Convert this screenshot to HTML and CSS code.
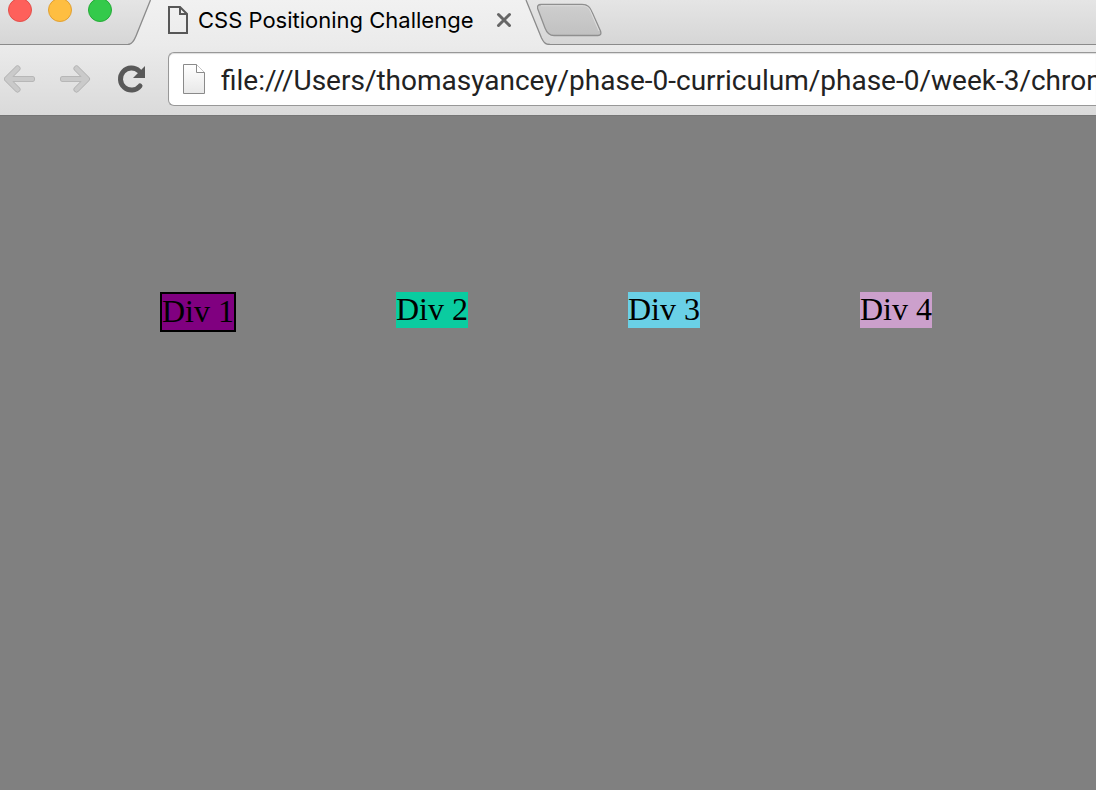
FILE: index.html
```html
<!DOCTYPE html>
<html lang="en">
<head>
<meta charset="utf-8">
<title>CSS Positioning Challenge</title>
<link rel="stylesheet" href="styles.css">
</head>
<body>
<header class="chrome">
  <div class="tab-strip">
    <div class="window-controls">
      <button class="light" aria-label="Close window"><svg width="24" height="22" viewBox="0 2 24 22"><circle cx="12" cy="12" r="11.5" fill="#fe605b" stroke="#e2504b"/></svg></button>
      <button class="light" aria-label="Minimize window"><svg width="24" height="22" viewBox="0 2 24 22"><circle cx="12" cy="12" r="11.5" fill="#febe41" stroke="#e0a034"/></svg></button>
      <button class="light" aria-label="Zoom window"><svg width="24" height="22" viewBox="0 2 24 22"><circle cx="12" cy="12" r="11.5" fill="#34ca4b" stroke="#26ab38"/></svg></button>
    </div>
    <div class="tab">
      <svg class="tab-shape" width="422" height="45" viewBox="0 0 422 45" aria-hidden="true">
        <defs><linearGradient id="tabFill" x1="0" y1="0" x2="0" y2="1"><stop offset="0" stop-color="#f1f1f1"/><stop offset="1" stop-color="#ebebeb"/></linearGradient></defs>
        <path d="M0 45V44.500C4 44.500 6 41 8 36L22.500 0H398L413.500 38C415.500 42 417 44.500 422 44.500V45Z" fill="url(#tabFill)"/>
        <path d="M0 44.500C4 44.500 6 41 8 36L22.500 0M398 0L413.500 38C415.500 42 417 44.500 422 44.500" fill="none" stroke="#8b8b8b" stroke-width="1.300"/>
      </svg>
      <svg class="tab-icon" width="20" height="28" viewBox="0 0 20 28" aria-hidden="true"><path d="M1 1H12L19 8V27H1ZM12 1V8H19" fill="none" stroke="#575757" stroke-width="2"/></svg>
      <span class="tab-title">CSS Positioning Challenge</span>
      <button class="tab-close" aria-label="Close tab"><svg width="16" height="16" viewBox="0 0 16 16"><path d="M2.500 2.500L13.500 13.500M13.500 2.500L2.500 13.500" stroke="#666" stroke-width="3" stroke-linecap="round"/></svg></button>
    </div>
    <button class="new-tab" aria-label="New tab"><svg width="66" height="34" viewBox="0 0 66 34">
      <defs><linearGradient id="newFill" x1="0" y1="0" x2="0" y2="1"><stop offset="0" stop-color="#cecece"/><stop offset="1" stop-color="#c1c1c1"/></linearGradient></defs>
      <path d="M4 1.500H45C51 1.500 53 4 55 9L63.500 28C64.500 31 63.500 32.500 61 32.500H17C11.500 32.500 9.500 29 8 25L.8 6C0 3 1 1.500 4 1.500Z" fill="url(#newFill)" stroke="#8f8f8f" stroke-width="1.300"/>
      <path d="M4 2.700H45C50 2.700 52 5 54 9.500L62 28" fill="none" stroke="#ddd"/>
    </svg></button>
  </div>
  <div class="toolbar">
    <nav class="nav">
      <button class="nav-button" aria-label="Back"><svg width="32" height="28" viewBox="0 0 32 28"><path d="M13.500 3.500L3 14L13.500 24.500M4 14H28" fill="none" stroke="#b0b0b0" stroke-width="6" stroke-linecap="round" stroke-linejoin="round"/><path d="M13.500 3.500L3 14L13.500 24.500M4 14H28" fill="none" stroke="#cacaca" stroke-width="4.500" stroke-linecap="round" stroke-linejoin="round"/></svg></button>
      <button class="nav-button" aria-label="Forward"><svg width="32" height="28" viewBox="1 0 32 28"><path d="M17.500 3.500L28 14L17.500 24.500M27 14H4" fill="none" stroke="#b0b0b0" stroke-width="6" stroke-linecap="round" stroke-linejoin="round"/><path d="M17.500 3.500L28 14L17.500 24.500M27 14H4" fill="none" stroke="#cacaca" stroke-width="4.500" stroke-linecap="round" stroke-linejoin="round"/></svg></button>
      <button class="nav-button" aria-label="Reload"><svg width="32" height="28" viewBox="0 0 32 28"><path d="M24 21A11 11 0 1 1 23 6" fill="none" stroke="#595959" stroke-width="5" stroke-linecap="round"/><path d="M29 1V13H17Z" fill="#595959"/></svg></button>
    </nav>
    <div class="address">
      <svg class="address-icon" width="22" height="30" viewBox="0 0 22 30" aria-hidden="true">
        <defs><linearGradient id="pageFill" x1="0" y1="0" x2="0" y2="1"><stop offset="0" stop-color="#fff"/><stop offset="1" stop-color="#e8e8e8"/></linearGradient></defs>
        <path d="M.5.5H13.500L21.500 8.500V29.500H.5Z" fill="url(#pageFill)" stroke="#8a8a8a"/><path d="M13.500.5V8.500H21.500" fill="#fff" stroke="#8a8a8a"/>
      </svg>
      <input class="address-input" type="text" aria-label="Address" value="file:///Users/thomasyancey/phase-0-curriculum/phase-0/week-3/chrome-devtools">
    </div>
  </div>
</header>
<main class="page">
  <div class="box box-one">Div 1</div>
  <div class="box box-two">Div 2</div>
  <div class="box box-three">Div 3</div>
  <div class="box box-four">Div 4</div>
</main>
</body>
</html>
```
FILE: styles.css
```css
* { box-sizing: border-box; }
body {
  margin: 0;
  min-height: 100vh;
  display: flex;
  flex-direction: column;
  background: #808080;
  overflow-x: hidden;
}
button { padding: 0; border: 0; background: none; }
svg { display: block; }
.chrome { font-family: Inter, "Liberation Sans", sans-serif; }
.tab-strip {
  display: flex;
  align-items: flex-start;
  height: 45px;
  background: linear-gradient(#e5e5e5, #d6d6d6);
  border-bottom: 1px solid #8b8b8b;
}
.window-controls {
  display: flex;
  flex: none;
  gap: 16px;
  width: 128px;
  padding-left: 8px;
}
.tab {
  position: relative;
  display: flex;
  flex: none;
  align-items: center;
  width: 409px;
  height: 40px;
  padding-left: 40px;
}
.tab-shape { position: absolute; left: 0; top: 0; }
.tab-icon, .tab-title, .tab-close { position: relative; }
.tab-title {
  width: 298px;
  padding-left: 10px;
  font-size: 22px;
  line-height: 40px;
  white-space: nowrap;
  color: #000;
}
.tab-close { margin-left: 10px; }
.new-tab { position: relative; padding-top: 3px; }
.toolbar {
  display: flex;
  align-items: center;
  gap: 20px;
  height: 71px;
  padding: 0 0 2px 4px;
  background: linear-gradient(#ebebeb, #dadada);
  border-bottom: 1px solid #757575;
}
.nav { display: flex; gap: 24px; flex: none; }
.address {
  display: flex;
  flex: 1;
  align-items: center;
  gap: 16px;
  min-width: 0;
  height: 54px;
  padding-left: 14px;
  background: #fff;
  border: 1px solid #989898;
  border-right: 0;
  border-radius: 6px 0 0 6px;
  box-shadow: inset 0 1px 1px #ddd;
}
.address-icon { flex: none; }
.address-input {
  flex: 1;
  min-width: 0;
  height: 52px;
  padding: 2px 0 0;
  border: 0;
  outline: 0;
  background: none;
  font-family: Roboto, "Liberation Sans", sans-serif;
  font-size: 28px;
  color: #222;
}
.page {
  display: flex;
  flex: 1;
  align-items: flex-start;
  gap: 160px;
  padding: 176px 160px 0;
  font: 32px/34px "Liberation Serif", serif;
  color: #000;
}
.box { flex: none; padding-bottom: 2px; }
.box-one { background: #800080; border: 2px solid #000; }
.box-two { background: #0acca0; }
.box-three { background: #6ad0e6; }
.box-four { background: #cca0cc; }
```
